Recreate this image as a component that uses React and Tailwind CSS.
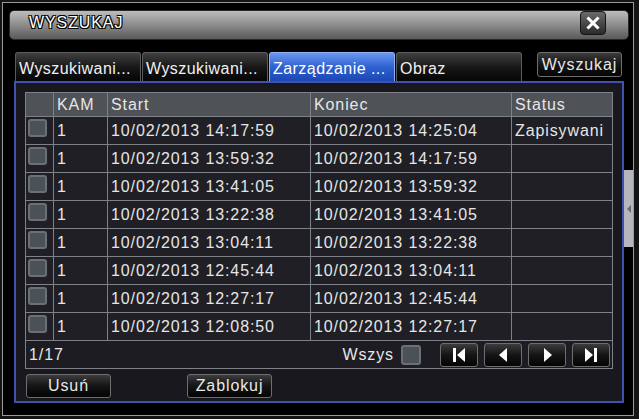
import React from 'react';

const rows = [
  ['10/02/2013 14:17:59', '10/02/2013 14:25:04', 'Zapisywani'],
  ['10/02/2013 13:59:32', '10/02/2013 14:17:59', ''],
  ['10/02/2013 13:41:05', '10/02/2013 13:59:32', ''],
  ['10/02/2013 13:22:38', '10/02/2013 13:41:05', ''],
  ['10/02/2013 13:04:11', '10/02/2013 13:22:38', ''],
  ['10/02/2013 12:45:44', '10/02/2013 13:04:11', ''],
  ['10/02/2013 12:27:17', '10/02/2013 12:45:44', ''],
  ['10/02/2013 12:08:50', '10/02/2013 12:27:17', ''],
];

const tabs = ['Wyszukiwani...', 'Wyszukiwani...', 'Zarządzanie ...', 'Obraz'];

const Box = () => (
  <div className="w-[19px] h-[18px] rounded-[3px] border-2 border-[#6c7074] bg-[#4a5157]" />
);

const NavIcon = ({ type }) => {
  const paths = {
    first: <><rect x="4" y="3" width="3" height="14" /><polygon points="16,3 16,17 8,10" /></>,
    prev: <polygon points="14,3 14,17 6,10" />,
    next: <polygon points="7,3 7,17 15,10" />,
    last: <><polygon points="4,3 4,17 12,10" /><rect x="13" y="3" width="3" height="14" /></>,
  };
  return (
    <svg width="20" height="20" viewBox="0 0 20 20" fill="#ffffff">{paths[type]}</svg>
  );
};

const btn = 'flex items-center justify-center rounded-[3px] border border-[#6e6e6e] bg-linear-to-b from-[#3c3c3c] via-[#151515] to-[#050505] text-[#e8e8e8]';

export default function App() {
  return (
    <div className="w-[639px] h-[419px] bg-[#141414] pt-[2px] pl-[2px] relative font-['Liberation_Sans',Arial,sans-serif] text-[16px] tracking-[0.9px] leading-none">
      <div className="w-[632px] h-[414px] border border-[#9a9a9a] bg-black">
        {/* title bar */}
        <div className="ml-[6px] mt-[7px] w-[620px] h-[30px] rounded-[5px] border border-[#2a2a2a] bg-linear-to-b from-[#bdbdbd] via-[#8c8c8c] to-[#5a5a5a] flex items-center justify-between pl-[19px] pr-[22px]">
          <span className="text-white text-[16px] pb-[4px] [text-shadow:1px_1px_0_#000,-1px_-1px_0_#000,1px_-1px_0_#000,-1px_1px_0_#000]">WYSZUKAJ</span>
          <div className="w-[26px] h-[24px] rounded-[4px] border border-[#151515] bg-linear-to-b from-[#6a6a6a] to-[#2a2a2a] flex items-center justify-center mb-[4px]">
            <svg width="14" height="14" viewBox="0 0 14 14">
              <path d="M2.5 2.5 L11.5 11.5 M11.5 2.5 L2.5 11.5" stroke="#ffffff" strokeWidth="3" strokeLinecap="square" />
            </svg>
          </div>
        </div>

        {/* tabs */}
        <div className="mt-[12px] ml-[12px] flex items-start">
          <div className="flex gap-px">
            {tabs.map((t, i) => (
              <div
                key={i}
                className={`w-[126px] h-[29px] rounded-t-[3px] border border-b-0 flex items-center pl-[3px] pt-[3px] whitespace-nowrap overflow-hidden tracking-[0.45px] ${
                  i === 2
                    ? 'border-[#8fb0f0] bg-linear-to-b from-[#6a96ee] via-[#2f62d2] to-[#1c47b4] text-white'
                    : 'border-[#5c5c5c] bg-linear-to-b from-[#404040] via-[#181818] to-[#060606] text-[#f0f0f0]'
                }`}
              >
                {t}
              </div>
            ))}
          </div>
          <div className={`${btn} ml-[15px] w-[85px] h-[25px]`}>Wyszukaj</div>
        </div>

        {/* panel */}
        <div className="ml-[11px] w-[610px] h-[322px] border-2 border-[#3f52ac] bg-[#18181e] pt-[9px] pl-[9px]">
          <div className="w-[588px] grid grid-cols-[27px_53px_202px_200px_100px] gap-px bg-[#7e8286] border border-[#7e8286] text-[#e6e6e6]">
            <div className="h-[23px] bg-[#4f5358]" />
            <div className="h-[23px] bg-[#4f5358] flex items-center pl-[3px]">KAM</div>
            <div className="h-[23px] bg-[#4f5358] flex items-center pl-[3px]">Start</div>
            <div className="h-[23px] bg-[#4f5358] flex items-center pl-[3px]">Koniec</div>
            <div className="h-[23px] bg-[#4f5358] flex items-center pl-[3px]">Status</div>
            {rows.map((r, i) => (
              <React.Fragment key={i}>
                <div className="h-[27px] bg-[#1f1f25] pl-[2px] pt-[2px]"><Box /></div>
                <div className="h-[27px] bg-[#1f1f25] flex items-center pl-[3px]">1</div>
                <div className="h-[27px] bg-[#1f1f25] flex items-center pl-[3px]">{r[0]}</div>
                <div className="h-[27px] bg-[#1f1f25] flex items-center pl-[3px]">{r[1]}</div>
                <div className="h-[27px] bg-[#1f1f25] flex items-center pl-[3px] whitespace-nowrap overflow-hidden">{r[2]}</div>
              </React.Fragment>
            ))}
            <div className="col-span-5 h-[27px] bg-[#1c1c22] flex items-center pl-[3px] pr-[2px]">
              <span>1/17</span>
              <span className="ml-auto">Wszys</span>
              <div className="ml-[7px] w-[20px] h-[20px] rounded-[3px] border-2 border-[#6c7074] bg-[#4a5157]" />
              <div className="ml-[19px] flex gap-[6px]">
                {['first', 'prev', 'next', 'last'].map((n) => (
                  <div key={n} className={`${btn} w-[38px] h-[24px]`}><NavIcon type={n} /></div>
                ))}
              </div>
            </div>
          </div>
          <div className="flex mt-[5px] ml-px">
            <div className={`${btn} w-[85px] h-[24px]`}>Usuń</div>
            <div className={`${btn} ml-[76px] w-[85px] h-[24px]`}>Zablokuj</div>
          </div>
        </div>
      </div>

      {/* side scroll handle */}
      <div className="absolute left-[624px] top-[170px] w-[9px] h-[77px] bg-[#b6b6be] flex items-center justify-center">
        <svg width="6" height="10" viewBox="0 0 6 10"><polygon points="5,1 5,9 1,5" fill="#6a6a72" /></svg>
      </div>
    </div>
  );
}
